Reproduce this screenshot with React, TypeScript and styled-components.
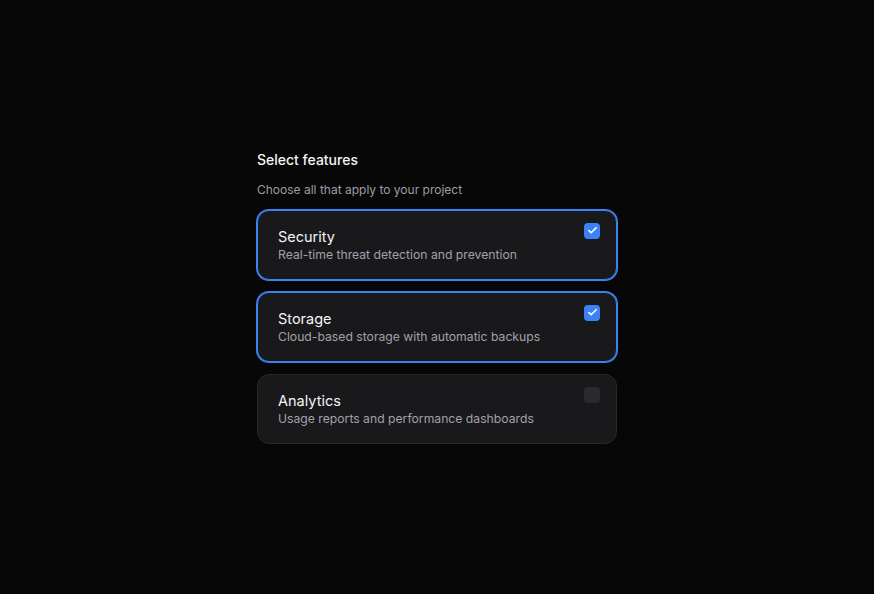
import styled, { createGlobalStyle } from "styled-components";
import { useState } from "react";

const GlobalStyle = createGlobalStyle`
  html, body {
    margin: 0;
    padding: 0;
    background: #070707;
  }
  body {
    font-family: Inter, "Noto Sans", sans-serif;
    -webkit-font-smoothing: antialiased;
  }
`;

const Page = styled.div`
  width: 874px;
  height: 594px;
  display: flex;
  align-items: center;
  justify-content: center;
`;

const Group = styled.div`
  width: 360px;
  display: flex;
  flex-direction: column;
`;

const Heading = styled.h2`
  margin: 0;
  font-size: 14px;
  line-height: 18px;
  font-weight: 500;
  color: #f4f4f5;
`;

const Hint = styled.p`
  margin: 13px 0 12px;
  font-size: 12px;
  line-height: 16px;
  color: #9d9da3;
`;

const List = styled.div`
  display: flex;
  flex-direction: column;
  gap: 12px;
`;

const Card = styled.label<{ $checked: boolean }>`
  position: relative;
  display: flex;
  flex-direction: column;
  padding: 16px 20px;
  border-radius: 12px;
  background: #19191b;
  border: 1px solid ${(p) => (p.$checked ? "#3b82f6" : "#27272a")};
  box-shadow: ${(p) => (p.$checked ? "0 0 0 1px #3b82f6" : "none")};
  cursor: pointer;
`;

const Title = styled.span`
  font-size: 14.5px;
  line-height: 20px;
  font-weight: 400;
  color: #f4f4f5;
`;

const Description = styled.span`
  font-size: 12.2px;
  line-height: 16px;
  color: #a1a1aa;
`;

const Box = styled.span<{ $checked: boolean }>`
  position: absolute;
  top: 12px;
  right: 16px;
  width: 16px;
  height: 16px;
  border-radius: 4px;
  background: ${(p) => (p.$checked ? "#3b82f6" : "#2a2a2d")};
  display: flex;
  align-items: center;
  justify-content: center;
`;

const features = [
  { id: "security", title: "Security", text: "Real-time threat detection and prevention" },
  { id: "storage", title: "Storage", text: "Cloud-based storage with automatic backups" },
  { id: "analytics", title: "Analytics", text: "Usage reports and performance dashboards" },
];

export default function App() {
  const [selected, setSelected] = useState<string[]>(["security", "storage"]);

  const toggle = (id: string) => {
    setSelected((s) => (s.includes(id) ? s.filter((x) => x !== id) : [...s, id]));
  };

  return (
    <>
      <GlobalStyle />
      <Page>
        <Group>
          <Heading>Select features</Heading>
          <Hint>Choose all that apply to your project</Hint>
          <List>
            {features.map((f) => {
              const on = selected.includes(f.id);
              return (
                <Card key={f.id} $checked={on} onClick={() => toggle(f.id)}>
                  <Title>{f.title}</Title>
                  <Description>{f.text}</Description>
                  <Box $checked={on}>
                    {on && (
                      <svg width="11" height="11" viewBox="0 0 24 24" fill="none" stroke="#fff" strokeWidth="3.5" strokeLinecap="round" strokeLinejoin="round">
                        <path d="M20 6 9 17l-5-5" />
                      </svg>
                    )}
                  </Box>
                </Card>
              );
            })}
          </List>
        </Group>
      </Page>
    </>
  );
}
